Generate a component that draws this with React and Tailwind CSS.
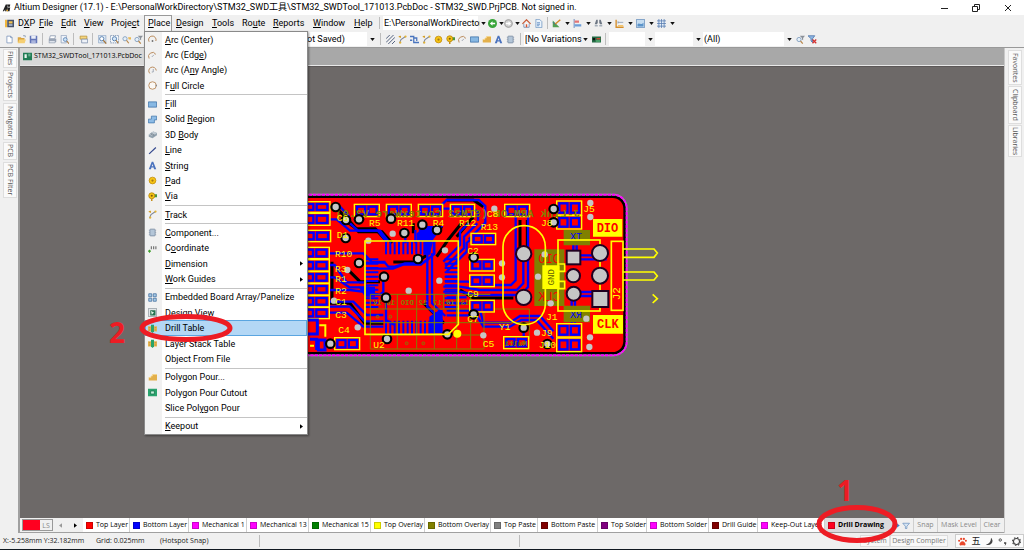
import React from "react";

const ARC = "#b98a5a";

const ICONS = {
  logo: (
    <>
      <path d="M1 11 5 2h3L6 11H4l.5-2.500L2.500 11zM8 2h3l-.5 3H8zM7 6h4l-1 5H7z" fill="#222" />
      <path d="M6 9h2v2H6z" fill="#e0a020" />
    </>
  ),
  dxp: (
    <>
      <path d="M0 1h3v10H0z" fill="#f0b63c" />
      <path d="M3 1h9v10H3z" fill="#44506b" />
      <path d="M5 3h5v3H5z" fill="#f2c14e" />
      <path d="M5 7h5v2H5z" fill="#b8c4d8" />
    </>
  ),
  page: <path d="M2.500 1.500h5l2 2v7h-7zM7.500 1.500v2h2" fill="#fff" stroke="#7590b8" />,
  open: (
    <>
      <path d="M1 3h4l1 1h4v6H1z" fill="#d9a441" />
      <path d="M3 6h9l-2 5H1z" fill="#f6cf72" />
      <path d="M8 1h3v2" fill="none" stroke="#7a8ba8" />
    </>
  ),
  save: (
    <>
      <path d="M1 1h10v10H1z" fill="#6375b8" />
      <path d="M3 1h6v4H3z" fill="#e9edf8" />
      <path d="M3 7h6v4H3z" fill="#aab5dc" />
    </>
  ),
  print: (
    <>
      <path d="M3 1h7L9 5H2z" fill="#fff" stroke="#8090a8" />
      <path d="M1 5h10v4l-2 2H1z" fill="#9aa5b5" />
      <path d="M2 8h7v2H2z" fill="#dfe4ec" />
    </>
  ),
  preview: (
    <>
      <path d="M1.500.5h7v10h-7z" fill="#eef3fa" stroke="#90a0ba" />
      <circle cx="7" cy="6" r="2.500" fill="#cde4f8" stroke="#4c75a8" />
      <path d="m9 8 3 3.500" stroke="#a5753a" strokeWidth="1.500" />
    </>
  ),
  panel: (
    <>
      <path d="M1.500 1.500h9v4h-9z" fill="#f7d67c" stroke="#b69038" />
      <path d="M3.500 5.500h8v5h-8z" fill="#eef2f8" stroke="#7a8ca8" />
    </>
  ),
  zoomDoc: (
    <>
      <path d="M.5.5h10v10H.5z" fill="#dce8f5" stroke="#93a9c6" />
      <circle cx="5" cy="5" r="2.800" fill="#fff" stroke="#35659e" />
      <path d="m7 7 4 4.500" stroke="#a5753a" strokeWidth="1.600" />
    </>
  ),
  zoomSel: (
    <>
      <path d="M.5.5h11v10H.5z" fill="#f4f8fc" stroke="#667da0" strokeDasharray="2 1" />
      <circle cx="6" cy="5" r="2.800" fill="#d5e7f8" stroke="#35659e" />
      <path d="m8 7 3 4" stroke="#a5753a" strokeWidth="1.600" />
    </>
  ),
  zoomPt: (
    <>
      <circle cx="4" cy="5" r="2.800" fill="#e6f0f8" stroke="#7090b5" />
      <path d="m6 7 3 4" stroke="#b8874a" strokeWidth="1.600" />
      <path d="M8 3h4v3H9z" fill="#e9b953" />
    </>
  ),
  zoomFilter: (
    <>
      <circle cx="4" cy="6" r="2.800" fill="#e6f0f8" stroke="#7090b5" />
      <path d="m6 8 3 3.500" stroke="#b8874a" strokeWidth="1.600" />
      <path d="M5 1h7L9.500 4v3L8 6V4z" fill="#8a9099" />
    </>
  ),
  back: (
    <>
      <circle cx="6" cy="6" r="6" fill="#38a53a" />
      <path d="M9.500 5H6V3L2.500 6 6 9V7h3.500z" fill="#fff" />
    </>
  ),
  forward: (
    <>
      <circle cx="6" cy="6" r="5" fill="#d0d0d0" stroke="#a0a0a0" strokeWidth="1.500" />
      <path d="M2.500 5H6V3l3.500 3L6 9V7H2.500z" fill="#fff" />
    </>
  ),
  home: (
    <>
      <path d="M2.500 6v5h7V6" fill="#fff" stroke="#5878a8" />
      <path d="M.5 6.500 6 1l5.500 5.500" fill="none" stroke="#c85a35" strokeWidth="1.600" />
      <path d="M5 7h2v4H5z" fill="#d8542f" />
    </>
  ),
  docBlue: (
    <>
      <path d="M2.500.5h5l3 3v8h-8z" fill="#eaf3fc" stroke="#6d94c2" />
      <path d="M4 5h4M4 7h4M4 9h3" stroke="#4c7cb8" />
    </>
  ),
  ruler: (
    <>
      <path d="M1 2v9h9z" fill="#54a052" />
      <path d="m4 7 7-6" stroke="#d48a28" strokeWidth="2" />
      <path d="M1 4 5 8" stroke="#3b66aa" />
    </>
  ),
  align: (
    <>
      <path d="M1.500 0v12" stroke="#4a6fb0" />
      <path d="M2 2h6v3H2z" fill="#e47474" />
      <path d="M2 7h9v3H2z" fill="#6d9ed8" />
    </>
  ),
  find: (
    <>
      <path d="M3 1h2v4L4 7H1zM7 1h2l2 6H8L7 5z" fill="#6d7784" />
      <path d="M1 8h4v2H1zM7 8h4v2H7z" fill="#a5afba" />
    </>
  ),
  dim: (
    <>
      <path d="M1.500 1v10h10" fill="none" stroke="#d58e2b" strokeWidth="1.800" />
      <path d="M4 4.500h7M4 3v3" stroke="#7f93ae" />
      <path d="M4 8h7v2H4z" fill="#f2c46c" />
    </>
  ),
  room: (
    <>
      <path d="M.5.5h11v11H.5z" fill="#c5dcf0" stroke="#5b86b5" />
      <path d="M2 7c2-3 4 2 8-2v5H2z" fill="#5b93c9" />
    </>
  ),
  grid: (
    <>
      <path d="M1 1h10v10H1z" fill="#e6effa" />
      <path d="M2.500 0v12M6 0v12M9.500 0v12M0 2.500h12M0 6h12M0 9.500h12" stroke="#5479ad" />
    </>
  ),
  hatch: (
    <path d="M0 5 5 0M0 10 10 0M3 12 12 3M8 12l4-4" stroke="#52617e" strokeWidth="1.300" />
  ),
  track: (
    <>
      <path d="m2 11 2-5 6-4" fill="none" stroke="#7e8799" strokeWidth="1.400" />
      <path d="m1 2 3 1M3 1v3" stroke="#d6a02a" strokeWidth="1.400" />
      <circle cx="10" cy="2" r="1.500" fill="#e4b332" />
      <circle cx="3" cy="10" r="1.500" fill="#e4b332" />
    </>
  ),
  diff: (
    <path d="M0 2h5v8h7M5 4h4v4M0 7h3" fill="none" stroke="#4a75be" strokeWidth="1.700" />
  ),
  pad: (
    <>
      <circle cx="6" cy="6" r="4.500" fill="#f6c414" stroke="#bf8a0a" />
      <circle cx="6" cy="6" r="1.500" fill="#a2761a" />
    </>
  ),
  via: (
    <>
      <path d="M6 3h6v4H6z" fill="#49953c" />
      <circle cx="5" cy="5" r="4" fill="#f6c414" stroke="#b07f0a" />
      <circle cx="5" cy="5" r="1.400" fill="#7c5a10" />
      <path d="M4 9h2v3H4z" fill="#c68f1b" />
    </>
  ),
  arc: (
    <>
      <path d="M1.500 10A5 5 0 0 1 10.500 4.500" fill="none" stroke={ARC} strokeWidth="1.300" />
      <path d="m5 8 3-3" stroke="#8993a3" />
    </>
  ),
  arcCenter: (
    <>
      <path d="M1.500 9A5 5 0 1 1 10.500 8" fill="none" stroke={ARC} strokeWidth="1.300" />
      <path d="M5 7h2v2H5z" fill="#555" />
    </>
  ),
  arcAny: (
    <>
      <path d="M2.500 10A5 5 0 1 1 11 6" fill="none" stroke={ARC} strokeWidth="1.300" />
      <path d="M7 4v4H5" fill="none" stroke="#8993a3" />
    </>
  ),
  circle: (
    <>
      <circle cx="6" cy="6" r="5" fill="#fbf8f4" stroke={ARC} strokeWidth="1.200" />
      <path d="M10 5h2v2h-2z" fill="#888" />
    </>
  ),
  fill: <path d="M.5 2.500h11v7H.5z" fill="#87b8e3" stroke="#3a6ea5" />,
  region: (
    <path d="M4.500 1.500h7v5h-3v4h-8v-5h4z" fill="#8ebce6" stroke="#3f75ab" />
  ),
  body: (
    <>
      <path d="m1 6 6-4 5 2v3l-6 4-5-2z" fill="#93a3af" />
      <path d="m1 6 6-4 5 2-6 4z" fill="#c0cad2" />
      <path d="m4 4 5 3M3 5l5 3" stroke="#74838f" />
    </>
  ),
  line: <path d="M1.500 10.500 10.500 2" stroke="#34488e" strokeWidth="1.600" />,
  string: (
    <path d="M5 1h2l4 10H8L7.500 8.500h-3L4 11H1zM5 7h2L6 4z" fill="#4a72bd" fillRule="evenodd" />
  ),
  comp: (
    <>
      <path d="M1 3h10M1 6h10M1 9h10" stroke="#a9b4c2" />
      <rect x="2.500" y="1.500" width="7" height="9" rx="1" fill="#b4c6d8" stroke="#73869c" />
    </>
  ),
  coord: (
    <>
      <path d="M0 9.500h4M2 7.500v4" stroke="#40a02c" strokeWidth="1.400" />
      <path d="M4.500 3v4M7.500 3v4M10.500 3v4" stroke="#777" strokeWidth="1.600" />
    </>
  ),
  array: (
    <path d="M1 1h4v4H1zM7 1h4v4H7zM1 7h4v4H1zM7 7h4v4H7z" fill="#a7cbe8" stroke="#426c9b" />
  ),
  view: (
    <>
      <path d="M.5.5h11v11H.5z" fill="#e2e6e8" stroke="#8a9399" />
      <path d="M3 3h7v7H3z" fill="#23734f" />
      <path d="m4 4 4 2-3 3" fill="#dff2e4" />
    </>
  ),
  stack: (
    <>
      <path d="M0 3h12v7H0z" fill="#e7b852" />
      <path d="M4 1h4v9l-2 2-2-2z" fill="#2ba36b" />
      <path d="M1 5h2M9 5h2M1 8h2M9 8h2" stroke="#b8822d" />
    </>
  ),
  pour: (
    <>
      <path d="M1 6h3V4h2V2h6v8H1z" fill="#e3b04b" />
      <path d="M1 6h3V4h2V2h6" fill="none" stroke="#f5d68b" />
    </>
  ),
  cutout: (
    <>
      <path d="M0 1h12v10H0z" fill="#2aa36d" />
      <path d="M3.500 4h5v4h-5z" fill="#c7efdc" stroke="#127349" />
    </>
  ),
  board: (
    <>
      <path d="M0 1h12v10H0z" fill="#217d55" />
      <path d="M2 3h3v5H2z" fill="#e9f5ee" />
      <path d="M7 3h3M7 5h3" stroke="#9cd3b8" />
    </>
  ),
  boardRed: (
    <>
      <path d="M0 2h12v8H0z" fill="#256b45" />
      <path d="M1 4h3v3H1z" fill="#111" />
      <path d="M6 4h5v2H6z" fill="#c84b32" />
      <path d="M5 7h6v2H5z" fill="#54b074" />
    </>
  ),
  clearFilter: (
    <>
      <path d="M0 1h9L6 5v5L4 8V5z" fill="#8fb6e3" stroke="#466fa8" />
      <path d="m6 6 5 5M11 6l-5 5" stroke="#d3312e" strokeWidth="1.700" />
    </>
  ),
  paw: (
    <>
      <path d="M6 5.500c2 0 4.500 2.500 4 4.500s-2.500 1-4 1-3.500 1-4-1 2-4.500 4-4.500z" fill="#e8472b" />
      <circle cx="1.500" cy="5" r="1.400" fill="#e8472b" />
      <circle cx="4.200" cy="2.500" r="1.500" fill="#e8472b" />
      <circle cx="7.800" cy="2.500" r="1.500" fill="#e8472b" />
      <circle cx="10.500" cy="5" r="1.400" fill="#e8472b" />
    </>
  ),
  moon: <path d="M8 1c5 5 0 12-7 9 5-1 7-4 7-9z" fill="#444" />,
  punct: (
    <>
      <circle cx="3" cy="4" r="1.600" fill="none" stroke="#444" strokeWidth="1.200" />
      <path d="M8 7h3v2l-2 3 .5-3H8z" fill="#444" />
    </>
  ),
  gear: (
    <>
      <circle cx="6" cy="6" r="4" fill="none" stroke="#444" strokeWidth="1.400" />
      <circle cx="6" cy="6" r="5.300" fill="none" stroke="#444" strokeWidth="1.400" strokeDasharray="2 2.160" />
    </>
  ),
  mask: (
    <>
      <path d="M0 2h3v3H0zM0 7h3v3H0z" fill="#f0d060" stroke="#b89530" />
      <path d="M5 3v6l4-3z" fill="#3b7fc4" />
    </>
  ),
  funnel: <path d="M1 3h9L6.500 7v3h-2V7z" fill="#d7e6f5" stroke="#6e93bf" />,
};

function Icon({ name }) {
  return (
    <svg viewBox="0 0 12 12" className="size-[9px] shrink-0" aria-hidden="true">
      {ICONS[name]}
    </svg>
  );
}

function Mnemonic({ text }) {
  const i = text.indexOf("&");
  if (i < 0) return <span>{text}</span>;
  return (
    <span>
      {text.slice(0, i)}
      <u className="underline-offset-1">{text[i + 1]}</u>
      {text.slice(i + 2)}
    </span>
  );
}

function Caret() {
  return (
    <svg viewBox="0 0 6 4" className="h-[3px] w-[5px] shrink-0" aria-hidden="true">
      <path d="M0 0h6L3 4z" fill="#111" />
    </svg>
  );
}

const BUTTON_WIDTHS = {
  plain: "w-3 justify-center",
  tight: "w-4 justify-between",
  wide: "w-[21px] justify-between pl-px pr-0.5",
};

function IconButton({ name, label, size = "plain" }) {
  return (
    <button type="button" aria-label={label || name} className={`flex shrink-0 items-center ${BUTTON_WIDTHS[size]}`}>
      <Icon name={name} />
      {size !== "plain" && <Caret />}
    </button>
  );
}

function Divider() {
  return <span className="mx-[3px] h-3 w-px shrink-0 bg-[#bdbdbd]" />;
}

function Combo({ label, value, width }) {
  return (
    <span className={`relative flex shrink-0 items-center ${width}`}>
      <select
        aria-label={label}
        defaultValue={value}
        className="h-[14px] w-full appearance-none bg-[linear-gradient(to_right,#fff_calc(100%-10px),#f1f1f1_0)] pl-px pr-2 text-[9px] leading-[14px] text-black"
      >
        <option>{value}</option>
      </select>
      <span className="pointer-events-none absolute right-0.5">
        <Caret />
      </span>
    </span>
  );
}

const MENU = [
  ["&Arc (Center)", "arcCenter"],
  ["Arc (Edg&e)", "arc"],
  ["Arc (A&ny Angle)", "arcAny"],
  ["F&ull Circle", "circle"],
  null,
  ["&Fill", "fill"],
  ["Solid &Region", "region"],
  ["3D &Body", "body"],
  ["&Line", "line"],
  ["&String", "string"],
  ["&Pad", "pad"],
  ["&Via", "via"],
  null,
  ["&Track", "track"],
  null,
  ["&Component...", "comp"],
  ["C&oordinate", "coord"],
  ["&Dimension", null, true],
  ["&Work Guides", null, true],
  null,
  ["Embedded Board Array/Panelize", "array"],
  ["Design View", "view"],
  ["Drill Table", "stack"],
  ["Layer Stack Table", "stack"],
  ["Object From File", null],
  null,
  ["Polygon Pour...", "pour"],
  ["Polygon Pour Cutout", "cutout"],
  ["Slice Pol&ygon Pour", null],
  null,
  ["&Keepout", null, true],
];

function PlaceMenu() {
  return (
    <ul
      role="menu"
      className="absolute left-0 top-full z-20 flex h-[404px] w-[164px] flex-col border border-[#8a8a8a] bg-[linear-gradient(to_right,#f1f1f1_17px,#fff_0)] text-[9px] shadow-[1px_1px_2px_rgba(0,0,0,0.4)]"
    >
      {MENU.map((item, i) =>
        item === null ? (
          <li key={i} role="separator" className="my-px ml-5 h-px bg-[#c4c4c4]" />
        ) : (
          <li key={i} role="none" className="relative flex flex-1">
            <button
              type="button"
              role="menuitem"
              className={`flex w-full items-center gap-2 pl-[3px] pr-1 text-left leading-3 ${
                item[0] === "Drill Table" ? "bg-[#b3d7f5] outline outline-1 -outline-offset-1 outline-[#5aa5e0]" : ""
              }`}
            >
              <span className="flex w-[9px] shrink-0">{item[1] && <Icon name={item[1]} />}</span>
              <span className="grow whitespace-nowrap">
                <Mnemonic text={item[0]} />
              </span>
              {item[2] && (
                <svg viewBox="0 0 4 6" className="h-[5px] w-[3px]" aria-hidden="true">
                  <path d="M0 0v6l4-3z" />
                </svg>
              )}
            </button>
            {item[0] === "Drill Table" && (
              <>
                <svg viewBox="0 0 94 28" className="pointer-events-none absolute -left-1.5 -top-1.5 z-10 h-7 w-[94px]" aria-hidden="true">
                  <ellipse cx="47" cy="14" rx="44" ry="11.500" fill="none" stroke="#ed1c24" strokeWidth="5" />
                </svg>
                <span className="absolute -left-9 -top-1 font-['Open_Sans',sans-serif] text-[28px] font-bold leading-8 text-[#ed1c24]">2</span>
              </>
            )}
          </li>
        ),
      )}
    </ul>
  );
}

const MENUBAR = [
  ["D&XP", "w-[21px]"],
  ["&File", "w-[22px]"],
  ["&Edit", "w-[23px]"],
  ["&View", "w-[27px]"],
  ["Proje&ct", "w-[37px]"],
  ["&Place", "w-[28px]"],
  ["&Design", "w-[36px]"],
  ["&Tools", "w-[30px]"],
  ["Ro&ute", "w-[31px]"],
  ["&Reports", "w-10"],
  ["&Window", "w-[41px]"],
  ["&Help", "w-[26px]"],
];

function MenuBar() {
  return (
    <div className="flex h-4 shrink-0 items-center bg-[#f0f0f0] pl-[5px] text-[9px]">
      <Icon name="dxp" />
      <nav className="flex h-full items-stretch">
        {MENUBAR.map(([label, width]) => (
          <div key={label} className={`relative flex shrink-0 ${width}`}>
            <button
              type="button"
              className={`flex w-full items-center whitespace-nowrap ${
                label === "&Place" ? "border border-b-0 border-[#9a9a9a] bg-[#f7f7f7] pl-[3px]" : "pl-1 pt-px"
              }`}
            >
              <Mnemonic text={label} />
            </button>
            {label === "&Place" && <PlaceMenu />}
          </div>
        ))}
      </nav>
      <Divider />
      <Combo label="Address" value="E:\PersonalWorkDirectory" width="w-[105px]" />
      <IconButton name="back" size="tight" />
      <IconButton name="forward" size="tight" />
      <IconButton name="home" />
      <IconButton name="docBlue" />
      <Divider />
      {["ruler", "align", "find", "dim", "room", "grid"].map((n) => (
        <IconButton key={n} name={n} size="wide" />
      ))}
    </div>
  );
}

function ToolBar() {
  return (
    <div className="flex h-4 shrink-0 items-center bg-[#f0f0f0] pl-[3px] text-[9px]">
      <IconButton name="page" />
      <IconButton name="open" />
      <IconButton name="save" />
      <Divider />
      <IconButton name="print" />
      <IconButton name="preview" />
      <Divider />
      <IconButton name="panel" />
      <Divider />
      <IconButton name="zoomDoc" />
      <IconButton name="zoomSel" />
      <IconButton name="zoomPt" />
      <IconButton name="zoomFilter" />
      <Divider />
      <span className="w-[155px] shrink-0" />
      <Combo label="View" value="ot Saved)" width="w-[71px]" />
      <Divider />
      <div className="flex pr-px">
        {["hatch", "track", "diff", "track", "pad", "via", "arc", "fill", "pour", "string", "comp"].map((n, i) => (
          <IconButton key={i} name={n} />
        ))}
      </div>
      <Divider />
      <Combo label="Variant" value="[No Variations" width="w-[66px]" />
      <IconButton name="boardRed" />
      <Divider />
      <Combo label="Net" value="" width="w-[46px]" />
      <Combo label="Component" value="" width="w-12" />
      <Combo label="Filter" value="(All)" width="w-[91px]" />
      <IconButton name="zoomFilter" />
      <IconButton name="clearFilter" />
    </div>
  );
}

function SideTab({ label, height }) {
  return (
    <button
      type="button"
      className={`w-[14px] whitespace-nowrap border border-[#dedede] bg-[#fafafa] font-['Open_Sans',sans-serif] text-[7px] leading-3 text-[#555] [writing-mode:vertical-rl] ${height}`}
    >
      {label}
    </button>
  );
}

const LEFT_TABS = [
  ["Files", "h-[19px]"],
  ["Projects", "h-[31px]"],
  ["Navigator", "h-[37px]"],
  ["PCB", "h-[18px]"],
  ["PCB Filter", "h-[36px]"],
];
const RIGHT_TABS = [
  ["Favorites", "h-[35px]"],
  ["Clipboard", "h-[38px]"],
  ["Libraries", "h-[32px]"],
];

const T = "#00f";

// left, top, width, height of two-pad parts
const PARTS = [
  [0, 35, 90, 32], [0, 70, 90, 36], [0, 121, 92, 34], [0, 172, 88, 34], [0, 209, 88, 34], [0, 245, 88, 34],
  [0, 281, 88, 34], [0, 317, 88, 34], [0, 352, 88, 34], [104, 443, 75, 36],
  [163, 43, 75, 37], [259, 43, 75, 37], [355, 43, 73, 37], [451, 43, 73, 37], [614, 43, 75, 37],
  [513, 130, 74, 34], [509, 208, 74, 35], [509, 255, 74, 35], [509, 331, 74, 35], [611, 440, 75, 36],
  [770, 33, 75, 42], [770, 77, 75, 40], [770, 401, 75, 40], [770, 444, 75, 41],
];

const VIAS = [
  [107, 51, 1], [138, 90, 1], [137, 144, 1], [177, 88, 1], [205, 152], [177, 219, 1], [142, 240], [252, 260, 1],
  [258, 323, 1], [326, 302], [102, 332], [173, 412], [91, 461, 1], [261, 447, 1], [273, 86, 1], [278, 131],
  [313, 129, 1], [367, 104, 1], [411, 120, 1], [354, 207, 1], [435, 181], [418, 272], [442, 433, 1],
  [583, 56], [761, 57, 1], [761, 97, 1], [871, 39], [871, 81], [521, 202, 1], [606, 220], [606, 262], [734, 193],
  [714, 260], [752, 340], [859, 386], [711, 428], [742, 462, 1], [870, 442], [868, 471], [671, 413, 1],
  [550, 436], [521, 373, 1],
];

const LABELS = [
  ["C6", 110, 94], ["D1", 110, 144], ["R10", 105, 202], ["R3", 105, 245], ["R1", 106, 277], ["R2", 106, 313],
  ["C1", 106, 346], ["C3", 106, 383], ["C4", 115, 430], ["U2", 220, 473], ["R5", 207, 109], ["R11", 291, 109],
  ["R4", 398, 107], ["R12", 477, 109], ["C8", 560, 80], ["R13", 542, 121], ["C2", 502, 192], ["C9", 502, 320],
  ["C7", 502, 396], ["Y1", 597, 420], ["C5", 548, 470], ["J5", 850, 67], ["J8", 723, 108], ["J1", 738, 390],
  ["J9", 723, 437], ["J10", 716, 475],
];

const TRACES = [
  "M90 50h30l28 30M150 100l24 22h66l24 30", "M90 88h20l40 34h84l26 34",
  "M90 190h100l26 26h40", "M90 225h14l36 52h60", "M90 262h14l44 30h60", "M90 300h60l60 8",
  "M90 335h70l40 40h50", "M90 350h60l44 44h56", "M90 368h50l50 42h60",
  "M195 218h60l10 12h20l30-10h50l22-14", "M195 236h84l30-12h54l40-32v-40",
  "M250 250v56l-10 8h-30", "M258 330v60l24 14", "M382 190v160l46 44M396 190v150l40 38",
  "M430 215l50-50v-40l26-26", "M436 230l56-56v-34l40-40", "M440 245l60-60v-26l20-18",
  "M426 44l14-14h96l20 18v50l-50 50M430 56h90l14 10v26",
  "M430 290h50l60 10h110l20-20v-90", "M430 305h50l50 10h130l24-24V80",
  "M435 275h70l30 10h98l14-14V80", "M440 362h100l10 36h80l30-20h60l40 46",
  "M440 376h90l20 34h80l34-20h46l50 56", "M436 260h40M440 322h60M440 340h60",
  "M820 120v80M830 120v80M825 330v70M815 330v70", "M840 196h80M840 208h80M840 306h70M840 318h70",
  "M671 413v30", "M316 130v30M346 120v40M360 106v50",
];
const CLEARANCES = [
  "M100 45l46 46 30 34h70l30 34", "M130 88l40 28h56l36 40", "M96 215v120M140 235l40 40h60", "M90 340h60l44 60h56",
  "M280 216h70l30-20M410 200l34-50 40-50", "M470 140l50-60M440 30h80l30 20", "M660 90v110M682 90v110",
  "M340 130v-30M386 150l40-40", "M372 340l60 60", "M480 300l40 24h120",
];
const EDGE = "M0 14h940a40 40 0 0 1 40 40v402a40 40 0 0 1-40 40H0";

function Board() {
  const pinsX = Array.from({ length: 12 }, (_, i) => 258 + i * 13);
  const pinsY = Array.from({ length: 12 }, (_, i) => 208 + i * 13);
  return (
    <svg viewBox="0 0 1110 510" className="absolute left-[280px] top-[123px] h-[170px] w-[370px]" role="img" aria-label="PCB layout">
      <path d={EDGE} fill="#000" />
      <path d="M0 24h938a32 32 0 0 1 32 32v398a32 32 0 0 1-32 32H0z" fill="#f00" />
      <path d={EDGE} fill="none" stroke="#a0a0a0" strokeWidth="5" />
      <path d={EDGE} fill="none" stroke="#f0f" strokeWidth="6" strokeDasharray="10 3" />

      <g fill="none" stroke="#000" strokeWidth="9">
        {CLEARANCES.map((d, i) => <path key={i} d={d} />)}
      </g>
      <path d="M350 130l30-22h50l-30 40-10 46h-20v-40h-20z M175 290h50v30h-30zM388 380l30-20h10v70h-40z" fill={T} />
      <g fill="none" stroke={T} strokeWidth="7">
        {TRACES.map((d, i) => <path key={i} d={d} />)}
      </g>
      <g stroke={T} strokeWidth="6">
        {pinsX.map((x) => <path key={x} d={`M${x} 155v38M${x} 392v42`} />)}
        {pinsY.map((y) => <path key={y} d={`M195 ${y}h40M434 ${y}h42`} />)}
      </g>

      <g fill="#808000">
        <path d="M703 178h90v170h-90zM791 120h79v46h-79zM791 347h79v50h-79z" />
      </g>
      <g fill="none" stroke="#808000" strokeWidth="3">
        <path d="M211 313h360M211 357h477M211 398h477M211 435h340M211 477h340M211 313v164M257 313v44M292 313v164M350 313v164M403 313v164M431 313v44M470 313v164M512 313v164M552 357v120M688 357v90" />
        <circle cx="233" cy="380" r="4" /><circle cx="271" cy="380" r="4" />
        <circle cx="320" cy="460" r="4" /><circle cx="370" cy="460" r="4" />
      </g>
      <g fill="#f00" fontFamily="Liberation Mono, monospace" fontSize="36">
        <text transform="translate(780 219) scale(-1 1)">DIO</text>
        <text transform="translate(780 334) scale(-1 1)">CLK</text>
      </g>
      <g fill={T} fontFamily="Liberation Mono, monospace" fontSize="30">
        <text transform="translate(846 150) scale(-1 1)">TX</text>
        <text transform="translate(846 384) scale(-1 1)">RX</text>
      </g>

      {PARTS.map(([x, y, w, h]) => (
        <g key={`${x}-${y}`}>
          <rect x={x} y={y} width={w} height={h} fill="#f00" />
          <rect x={x + 8} y={y + 7} width={w / 2 - 13} height={h - 14} fill="#f00" stroke={T} strokeWidth="7" />
          <rect x={x + w / 2 + 5} y={y + 7} width={w / 2 - 13} height={h - 14} fill="#f00" stroke={T} strokeWidth="7" />
          <rect x={x} y={y} width={w} height={h} fill="none" stroke="#ff0" strokeWidth="4" />
        </g>
      ))}
      <g fill="#808000" fontFamily="Liberation Mono, monospace" fontWeight="bold">
        <text transform="translate(840 82) scale(-1 1)" fontSize="33">J-Link ARM-OB (STM32 CortexWare V2.0)</text>
        <g fontSize="22">
          <text transform="translate(246 345) scale(-1 1)">1V</text>
          <text transform="translate(286 345) scale(-1 1)">18</text>
          <text transform="translate(342 345) scale(-1 1)">DIO</text>
          <text transform="translate(382 345) scale(-1 1)">12</text>
          <text transform="translate(426 345) scale(-1 1)">17</text>
          <text transform="translate(464 345) scale(-1 1)">10</text>
          <text transform="translate(508 345) scale(-1 1)">13</text>
          <text transform="translate(680 468) scale(-1 1)">Multi</text>
        </g>
      </g>
      <path d="M22 390h30v42H22M30 448h20v32M55 450h20v30H55z" fill="none" stroke={T} strokeWidth="9" />
      <path d="M58 406h18v34M30 467h12" fill="none" stroke="#ff0" strokeWidth="6" />

      {VIAS.map(([x, y, ring]) => (
        <g key={`${x}-${y}`}>
          {ring && <circle cx={x} cy={y} r="16" fill="#000" />}
          <circle cx={x} cy={y} r="9.500" fill="#c6c6c6" />
        </g>
      ))}

      <g fill="none" stroke="#ff0" strokeWidth="5">
        <path d="M195 153h280v250l-30 30H195z" />
        <rect x="609" y="107" width="127" height="297" rx="63" />
        <rect x="774" y="150" width="126" height="213" />
        <path d="M774 222h20v22h-20M774 274h20v22h-20" />
        <rect x="934" y="154" width="35" height="207" />
        <path d="M969 177h93l10 12-10 13h-93M969 246h93l10 12-10 12h-93M1058 313l14 13-14 13" />
      </g>
      <circle cx="472" cy="431" r="12" fill="#ff0" />

      <g fill="#c6c6c6" stroke="#200020" strokeWidth="6">
        <circle cx="671" cy="191" r="23" /><circle cx="671" cy="322" r="23" />
        <rect x="800" y="182" width="41" height="41" />
        <circle cx="820" cy="257" r="20" /><circle cx="821" cy="311" r="21" />
        <circle cx="900" cy="189" r="24" /><circle cx="900" cy="257" r="24" />
        <rect x="877" y="303" width="48" height="48" />
      </g>

      <g fill="#ff0">
        <path d="M879 87h88v53h-88zM879 375h90v56h-90zM727 226h52v71h-52z" />
      </g>
      <g fontFamily="Liberation Mono, monospace" fontWeight="bold" fontSize="36" fill="#f00">
        <text x="890" y="127">DIO</text>
        <text x="891" y="415">CLK</text>
      </g>
      <text transform="translate(762 286) rotate(-90)" fontFamily="Liberation Mono, monospace" fontSize="27" fill="#606000">GND</text>
      <g fontFamily="Liberation Mono, monospace" fontSize="29" fill="#ff0">
        {LABELS.map(([t, x, y]) => <text key={t} x={x} y={y}>{t}</text>)}
        <text transform="translate(960 331) rotate(-90)" fontSize="33">J2</text>
      </g>
    </svg>
  );
}

const LAYERS = [
  ["Top Layer", "bg-[#ff0000]", "w-[47px]"],
  ["Bottom Layer", "bg-[#0000ff]", "w-[59px]"],
  ["Mechanical 1", "bg-[#ff00ff]", "w-[58px]"],
  ["Mechanical 13", "bg-[#ff00ff]", "w-[62px]"],
  ["Mechanical 15", "bg-[#008000]", "w-[62px]"],
  ["Top Overlay", "bg-[#ffff00]", "w-[54px]"],
  ["Bottom Overlay", "bg-[#808000]", "w-[66px]"],
  ["Top Paste", "bg-[#808080]", "w-[47px]"],
  ["Bottom Paste", "bg-[#800000]", "w-[60px]"],
  ["Top Solder", "bg-[#800080]", "w-[49px]"],
  ["Bottom Solder", "bg-[#ff00ff]", "w-[62px]"],
  ["Drill Guide", "bg-[#800000]", "w-[49px]"],
  ["Keep-Out Layer", "bg-[#ff00ff]", "w-[67px]"],
  ["Drill Drawing", "bg-[#ff0020]", "w-[68px]"],
];

function LayerTabs() {
  return (
    <div className="flex h-[15px] shrink-0 items-stretch border-b border-[#a0a0a0] bg-[#f0f0f0] font-['Open_Sans',sans-serif] text-[7px]">
      <button type="button" className="my-px ml-0.5 flex w-[31px] shrink-0 border border-[#999] text-[#888]">
        <span className="w-[17px] bg-[#ff0020]" />
        <span className="grow text-center leading-3">LS</span>
      </button>
      <div className="flex w-[30px] shrink-0 items-center justify-around">
        <button type="button" aria-label="Previous layers">
          <svg viewBox="0 0 4 6" className="h-[5px] w-[3px]"><path d="M4 0v6L0 3z" fill="#999" /></svg>
        </button>
        <button type="button" aria-label="Next layers">
          <svg viewBox="0 0 4 6" className="h-[5px] w-[3px]"><path d="M0 0v6l4-3z" /></svg>
        </button>
      </div>
      {LAYERS.map(([name, color, width]) => {
        const active = name === "Drill Drawing";
        return (
          <button
            type="button"
            key={name}
            className={`relative flex shrink-0 items-center gap-[3px] whitespace-nowrap border-r border-[#cfcfcf] pl-[3px] ${width} ${
              active ? "z-10 bg-[#dcdadc] font-bold" : "bg-white"
            }`}
          >
            <span className={`size-[7px] shrink-0 border border-black/20 ${color}`} />
            <span>{name}</span>
            {active && (
              <>
                <svg viewBox="0 0 82 38" className="pointer-events-none absolute -left-[9px] -top-[13px] h-[38px] w-[82px]" aria-hidden="true">
                  <ellipse cx="41" cy="19" rx="38" ry="16.500" fill="none" stroke="#ed1c24" strokeWidth="5" />
                </svg>
                <span className="absolute -top-11 left-3 text-[28px] font-bold leading-8 text-[#ed1c24]">1</span>
              </>
            )}
          </button>
        );
      })}
      <div className="flex w-5 shrink-0 items-center">
        <Icon name="mask" />
        <Icon name="funnel" />
      </div>
      {[["Snap", "w-6"], ["Mask Level", "w-[43px]"], ["Clear", "w-[23px]"]].map(([name, width]) => (
        <button type="button" key={name} className={`shrink-0 whitespace-nowrap border-l border-[#cfcfcf] text-[#888] ${width}`}>
          {name}
        </button>
      ))}
    </div>
  );
}

function StatusBar() {
  return (
    <footer className="flex h-[17px] shrink-0 items-center border-b border-[#101820] bg-[#f0f0f0] pl-[3px] font-['Open_Sans',sans-serif] text-[7px] text-[#222]">
      <span className="w-[93px] shrink-0 whitespace-nowrap">X:-5.258mm Y:32.182mm</span>
      <span className="w-16 shrink-0 whitespace-nowrap">Grid: 0.025mm</span>
      <span className="w-[99px] shrink-0 whitespace-nowrap">(Hotspot Snap)</span>
      <span className="h-3 w-px bg-[#bbb]" />
      <span className="h-3 w-[260px] border-r border-[#bbb]" />
      <div className="ml-auto flex h-3 text-[#777]">
        <button type="button" className="w-[30px] border border-[#ddd] bg-[#f8f8f8] leading-[10px]">System</button>
        <button type="button" className="w-[58px] whitespace-nowrap border border-[#ddd] bg-[#f8f8f8] leading-[10px]">Design Compiler</button>
      </div>
      <div className="ml-[7px] flex h-[14px] w-[69px] items-center justify-around border border-[#ccc] bg-[#fbfbfb]">
        <Icon name="paw" />
        <span className="font-['Noto_Sans_CJK_SC',sans-serif] text-[9px] leading-3">五</span>
        <Icon name="moon" />
        <Icon name="punct" />
        <Icon name="gear" />
      </div>
    </footer>
  );
}

export default function App() {
  return (
    <div className="flex h-screen flex-col overflow-hidden bg-[#f0f0f0] font-['Roboto','Noto_Sans_CJK_SC',sans-serif] text-black">
      <header className="flex h-[15px] shrink-0 items-center bg-white pl-0.5 text-[9px]">
        <Icon name="logo" />
        <h1 className="ml-[3px] grow whitespace-nowrap">
          Altium Designer (17.1) - E:\PersonalWorkDirectory\STM32_SWD工具\STM32_SWDTool_171013.PcbDoc - STM32_SWD.PrjPCB. Not signed in.
        </h1>
        <div className="flex w-[84px] shrink-0 items-center justify-between pr-3">
          <button type="button" aria-label="Minimize">
            <svg viewBox="0 0 8 8" className="size-2"><path d="M1 4.500h7" stroke="#222" /></svg>
          </button>
          <button type="button" aria-label="Restore">
            <svg viewBox="0 0 8 8" className="size-2"><path d="M.5 2.500h5v5h-5zM2.500 2V.5h5v5H6" fill="none" stroke="#222" /></svg>
          </button>
          <button type="button" aria-label="Close">
            <svg viewBox="0 0 8 8" className="size-2"><path d="m1 1 6 6M7 1 1 7" stroke="#222" /></svg>
          </button>
        </div>
      </header>
      <MenuBar />
      <ToolBar />
      <div className="flex min-h-0 grow border-t border-[#999]">
        <aside className="flex w-5 shrink-0 flex-col gap-0.5 border-r-2 border-[#a0a0a0] pl-[3px] pt-px">
          {LEFT_TABS.map(([t, h]) => <SideTab key={t} label={t} height={h} />)}
        </aside>
        <main className="flex min-w-0 grow flex-col">
          <div className="flex h-[18px] shrink-0 border-b border-[#e8e8e8] bg-[#a8a8a8]">
            <button type="button" className="flex w-[130px] items-center gap-0.5 bg-[#d8d8d8] pl-[3px] font-['Open_Sans',sans-serif] text-[7px]">
              <Icon name="board" />
              <span className="whitespace-nowrap">STM32_SWDTool_171013.PcbDoc</span>
            </button>
          </div>
          <section className="relative min-h-0 grow overflow-hidden border-t border-[#5c5858] bg-[#6d6968]">
            <Board />
          </section>
          <LayerTabs />
        </main>
        <aside className="flex w-5 shrink-0 flex-col gap-px border-l border-[#c8c8c8] pl-[3px] pt-0.5">
          {RIGHT_TABS.map(([t, h]) => <SideTab key={t} label={t} height={h} />)}
        </aside>
      </div>
      <StatusBar />
    </div>
  );
}
